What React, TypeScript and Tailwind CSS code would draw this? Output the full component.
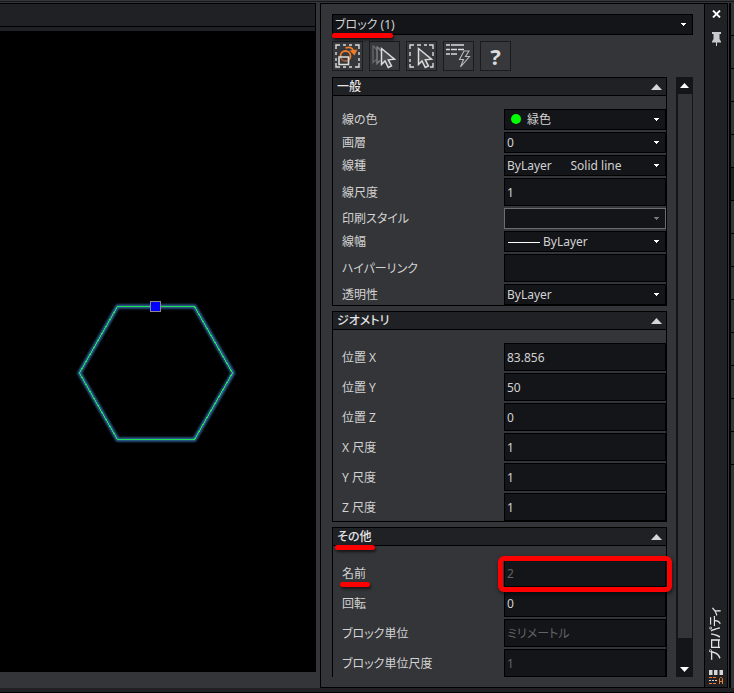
import { useState, type ReactNode } from "react";

type Field = {
  id: string;
  label: string;
  value: string;
  kind: "select" | "text";
  disabled?: boolean;
  mark?: "dot" | "line";
  highlight?: boolean;
};

const generalFields: Field[] = [
  { id: "color", label: "線の色", value: "緑色", kind: "select", mark: "dot" },
  { id: "layer", label: "画層", value: "0", kind: "select" },
  {
    id: "linetype",
    label: "線種",
    value: "ByLayer\u00a0\u00a0\u00a0\u00a0\u00a0\u00a0Solid line",
    kind: "select",
  },
  { id: "ltscale", label: "線尺度", value: "1", kind: "text" },
  { id: "plot", label: "印刷スタイル", value: "", kind: "select", disabled: true },
  { id: "weight", label: "線幅", value: "ByLayer", kind: "select", mark: "line" },
  { id: "link", label: "ハイパーリンク", value: "", kind: "text" },
  { id: "alpha", label: "透明性", value: "ByLayer", kind: "select" },
];

const geometryFields: Field[] = [
  { id: "px", label: "位置 X", value: "83.856", kind: "text" },
  { id: "py", label: "位置 Y", value: "50", kind: "text" },
  { id: "pz", label: "位置 Z", value: "0", kind: "text" },
  { id: "sx", label: "X 尺度", value: "1", kind: "text" },
  { id: "sy", label: "Y 尺度", value: "1", kind: "text" },
  { id: "sz", label: "Z 尺度", value: "1", kind: "text" },
];

const otherFields: Field[] = [
  { id: "name", label: "名前", value: "2", kind: "text", disabled: true, highlight: true },
  { id: "rotation", label: "回転", value: "0", kind: "text" },
  { id: "unit", label: "ブロック単位", value: "ミリメートル", kind: "text", disabled: true },
  { id: "unitscale", label: "ブロック単位尺度", value: "1", kind: "text", disabled: true },
];

function Chevron({ dim }: { dim?: boolean }) {
  return (
    <svg
      className={`pointer-events-none absolute right-[7px] top-[9px] h-[3px] w-[5px] ${
        dim ? "text-[#77787a]" : "text-white"
      }`}
      viewBox="0 0 5 3"
      fill="currentColor"
      shapeRendering="crispEdges"
    >
      <path d="M0 0h5v1h-1v1h-1v1h-1v-1h-1v-1h-1z" />
    </svg>
  );
}

function Underline({ className }: { className: string }) {
  return (
    <span
      className={`pointer-events-none absolute z-10 h-[5px] rounded-full bg-[#fe0000] shadow-[1px_2px_3px_rgba(0,0,0,0.6)] ${className}`}
    />
  );
}

function FieldRow({ field }: { field: Field }) {
  const { id, label, value, kind, disabled, mark, highlight } = field;
  return (
    <div className="flex items-center">
      <div className="relative w-[171px] shrink-0 pl-[9px] pt-px">
        <label htmlFor={id} className="block">
          {label}
        </label>
        {highlight && <Underline className="left-[7px] top-[17px] w-[30px]" />}
      </div>
      <div className="relative flex-1">
        {kind === "select" ? (
          <>
            <select
              id={id}
              disabled={disabled}
              className={`block h-[21px] w-full appearance-none border bg-[#141519] pr-4 opacity-100 ${
                disabled ? "border-[#6c6d6f]" : "border-black"
              } ${mark === "dot" ? "pl-[22px]" : mark === "line" ? "pl-[38px]" : "pl-[2px]"}`}
            >
              <option>{value}</option>
            </select>
            {mark === "dot" && (
              <span className="absolute left-[7px] top-[5px] size-[10px] rounded-full bg-[#00ff00]" />
            )}
            {mark === "line" && (
              <span className="absolute left-1 top-[11px] h-px w-8 bg-white" />
            )}
            <Chevron dim={disabled} />
          </>
        ) : (
          <input
            id={id}
            type="text"
            defaultValue={value}
            disabled={disabled}
            className="block h-7 w-full border border-black bg-[#141519] pl-[2px] disabled:text-[#626365]"
          />
        )}
        {highlight && (
          <span className="pointer-events-none absolute -bottom-[5px] -left-[6px] -right-[6px] -top-[3px] z-10 rounded-md border-[5px] border-[#fe0000] shadow-[1px_2px_4px_rgba(0,0,0,0.6)]" />
        )}
      </div>
    </div>
  );
}

function Section({ title, fields, marked }: { title: string; fields: Field[]; marked?: boolean }) {
  const [open, setOpen] = useState(true);
  return (
    <section className="border border-black">
      <h2 className="relative">
        <button
          type="button"
          onClick={() => setOpen(!open)}
          className="flex h-[18px] w-full items-center justify-between border-b border-black bg-[#202124] px-1 pt-px font-medium text-[#e4e4e4]"
        >
          {title}
          <svg className="h-[6px] w-[11px]" viewBox="0 0 11 6" fill="#d6d6d6">
            <path d={open ? "M5.5 0L11 6H0z" : "M5.5 6L11 0H0z"} />
          </svg>
        </button>
        {marked && <Underline className="left-[2px] top-[17px] w-10" />}
      </h2>
      {open && (
        <div className="flex flex-col gap-[2px] pt-[13px]">
          {fields.map((field) => (
            <FieldRow key={field.id} field={field} />
          ))}
        </div>
      )}
    </section>
  );
}

function ToolButton({ label, children }: { label: string; children: ReactNode }) {
  return (
    <button
      type="button"
      aria-label={label}
      className="h-[30px] w-[31px] border border-[#1a1b1e] bg-[#37383b]"
    >
      {children}
    </button>
  );
}

const cursorPath = "M11.5 6.5V22.5L15 19L18.3 25.5L21.5 24L18.3 17.8L24.5 17.2Z";

function Toolbar() {
  return (
    <div className="mt-[6px] flex gap-[6px]">
      <ToolButton label="Quick select">
        <svg viewBox="0 0 29 28" fill="none" className="size-full">
          <path
            d="M3 7V3H7M10 3H13M16 3H19M22 3H26V7M26 10V13M26 16V19M26 21V25H22M19 25H16M13 25H10M7 25H3V21M3 19V16M3 13V10"
            stroke="#dcdcdc"
            strokeWidth="1.4"
          />
          <circle cx="12.5" cy="14" r="5" stroke="#ed7d2b" strokeWidth="1.8" />
          <path d="M12.5 6C16 4.5 19.5 5.5 20.5 9" stroke="#ed7d2b" strokeWidth="1.8" />
          <path d="M16.5 8.5L24.5 7.5L21.5 13.5Z" fill="#ed7d2b" />
          <path d="M6 15H15.5V22.5H6Z" fill="#37383b" fillOpacity="0.5" stroke="#dcdcdc" strokeWidth="1.6" />
        </svg>
      </ToolButton>
      <ToolButton label="Pick add">
        <svg viewBox="0 0 29 28" fill="none" className="size-full">
          <path d="M3 3.5V20.5L6.5 17.5M3 3.5L7 8" stroke="#646567" strokeWidth="1.4" />
          <path d="M7 4.5V21.5L10 18.5M7 4.5L11 9" stroke="#7f8082" strokeWidth="1.4" />
          <path d={cursorPath} fill="#4a4b4e" stroke="#dcdcdc" strokeWidth="1.5" />
        </svg>
      </ToolButton>
      <ToolButton label="Select objects">
        <svg viewBox="0 0 29 28" fill="none" className="size-full">
          <path
            d="M7 3H3V7M3 10V14M3 17V20M3 22V25H7M10 3H14M17 3H20M22 3H26V7M26 10V14M26 21V25H23"
            stroke="#dcdcdc"
            strokeWidth="1.4"
          />
          <path d={cursorPath} fill="#4a4b4e" stroke="#dcdcdc" strokeWidth="1.5" />
        </svg>
      </ToolButton>
      <ToolButton label="Quick properties">
        <svg viewBox="0 0 29 28" fill="none" className="size-full">
          <path
            d="M2 3H6M7 3H20M2 7.5H6M7 7.5H13M14 7.5H20M2 12H6M7 12H13"
            stroke="#dcdcdc"
            strokeWidth="1.5"
          />
          <path
            d="M20 9H25L21.5 14.5H25.5L16.5 25L19.5 17.5H15.5Z"
            stroke="#b9babb"
            strokeWidth="1.1"
          />
        </svg>
      </ToolButton>
      <ToolButton label="Help">
        <span className="text-[22px] font-bold leading-7 text-[#dcdcdc]">?</span>
      </ToolButton>
    </div>
  );
}

function ScrollBar() {
  return (
    <div className="flex w-[17px] shrink-0 flex-col bg-[#141519]">
      <button type="button" aria-label="Scroll up" className="flex h-[17px] items-center justify-center">
        <svg className="h-[5px] w-[9px]" viewBox="0 0 9 5" fill="#fff">
          <path d="M4.5 0L9 5H0z" />
        </svg>
      </button>
      <div className="ml-[2px] mr-px flex-1 bg-[#343538]" />
      <button
        type="button"
        aria-label="Scroll down"
        className="flex h-[39px] items-end justify-center pb-[5px]"
      >
        <svg className="h-[5px] w-[9px]" viewBox="0 0 9 5" fill="#fff">
          <path d="M4.5 5L9 0H0z" />
        </svg>
      </button>
    </div>
  );
}

function Drawing() {
  return (
    <main className="flex min-w-0 flex-1 flex-col">
      <div className="h-[24px] border-y border-r border-black bg-[#202124]" />
      <div className="h-1 border-r border-black bg-[#202124]" />
      <div className="relative flex-1 overflow-hidden bg-black">
        <svg className="absolute left-[69px] top-[265px] h-[154px] w-[174px]" viewBox="0 0 174 154" fill="none">
          <defs>
            <filter id="glow" x="-10%" y="-10%" width="120%" height="120%">
              <feGaussianBlur stdDeviation="1.2" />
            </filter>
          </defs>
          <path
            d="M48.5 10.5H125.5L164 77L125.5 143.5H48.5L10.5 77Z"
            stroke="#336aa6"
            strokeWidth="4"
            filter="url(#glow)"
          />
          <path
            d="M48.5 10.5H125.5L163.5 77L125.5 143.5H48.5L10.5 77Z"
            stroke="#1fe052"
            shapeRendering="crispEdges"
          />
          <rect x="81.5" y="5.5" width="10" height="10" fill="#0000fe" stroke="#8a8a8a" />
        </svg>
      </div>
      <div className="h-4 shrink-0" />
    </main>
  );
}

function SideBar() {
  return (
    <div className="flex w-6 shrink-0 flex-col items-center border-x border-black bg-[#202124] pb-[3px] pt-[6px]">
      <button type="button" aria-label="Close">
        <svg className="block h-[8px] w-[9px]" viewBox="0 0 9 8" stroke="#fff" strokeWidth="1.8">
          <path d="M1 0.5L8 7.5M8 0.5L1 7.5" />
        </svg>
      </button>
      <button type="button" aria-label="Auto-hide" className="mt-[14px]">
        <svg className="block h-[14px] w-[9px]" viewBox="0 0 9 14" fill="#c9cacb">
          <path d="M0 0H9V2H7.5V7L9 9.5V10.5H0V9.5L1.5 7V2H0z" />
          <path d="M4 10H5V14H4z" />
        </svg>
      </button>
      <h1 className="mt-auto rotate-180 font-medium leading-[14px] text-[#e4e4e4] [text-orientation:sideways] [writing-mode:vertical-rl]">
        プロパティ
      </h1>
      <svg className="mt-[10px] h-[14px] w-[14px] shrink-0" viewBox="0 0 14 14" fill="none">
        <path d="M0 0H3.5V5H0zM5 0H8.5V5H5zM10.5 0H14V5H10.5z" fill="#d6d6d6" />
        <path d="M0 7.5H8M0 13.5H8" stroke="#ed7d2b" strokeDasharray="3 1" />
        <path d="M0 10.5H2M3 10.5H5M6 10.5H8" stroke="#d6d6d6" />
        <path d="M10.5 14V8.5L11.5 7.5H12.5L13.5 8.5V14M10.5 11.5H13.5" stroke="#ed7d2b" />
      </svg>
    </div>
  );
}

export default function App() {
  return (
    <div className="flex h-screen flex-col overflow-hidden border-b border-black bg-[#343538] font-['Noto_Sans','Noto_Sans_CJK_JP',sans-serif] text-[12px] leading-4 text-[#d2d2d2] [font-feature-settings:'palt']">
      <div className="h-[3px] shrink-0 pt-px">
        <div className="h-px bg-[#17181a]" />
      </div>
      <div className="flex min-h-0 flex-1">
        <Drawing />
        <aside className="ml-1 flex w-[384px] shrink-0 flex-col border-y border-l border-black px-[11px] py-[10px]">
          <div className="relative">
            <select
              aria-label="選択"
              className="block h-[21px] w-full appearance-none border border-black bg-[#141519] pl-[2px] pr-4"
            >
              <option>ブロック (1)</option>
            </select>
            <Chevron />
            <Underline className="left-0 top-[19px] w-[61px]" />
          </div>
          <Toolbar />
          <div className="mt-[6px] flex min-h-0 flex-1">
            {/* right padding leaves room for the highlight frame */}
            <div className="-ml-2 flex min-w-0 flex-1 flex-col gap-[5px] overflow-hidden pl-2 pr-[9px]">
              <Section title="一般" fields={generalFields} />
              <Section title="ジオメトリ" fields={geometryFields} />
              <Section title="その他" fields={otherFields} marked />
            </div>
            <ScrollBar />
          </div>
        </aside>
        <div className="flex border-y border-black">
          <SideBar />
        </div>
        <div className="ml-px flex w-[5px] shrink-0 flex-col border-l-2 border-black">
          {Array.from({ length: 14 }, (_, i) => (
            <div
              key={i}
              className={`h-[33px] shrink-0 border-b border-black ${i === 5 ? "bg-[#202124]" : ""}`}
            />
          ))}
        </div>
      </div>
      <div className="h-1 shrink-0 bg-[#202124]" />
    </div>
  );
}
